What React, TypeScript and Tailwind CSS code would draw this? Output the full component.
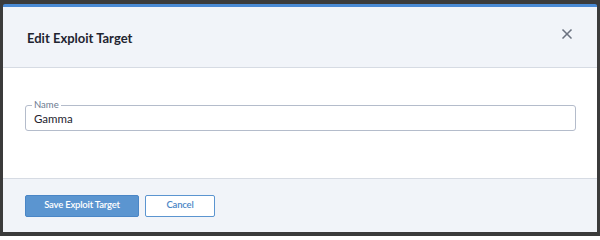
import React from 'react';
import { X } from 'lucide-react';

const App: React.FC = () => {
  return (
    <div
      className="w-[600px] h-[236px] bg-[#3b3b3b] pt-[4px] pl-[3px] pr-[3px] pb-[4px]"
      style={{ fontFamily: 'Lato, "Open Sans", "Liberation Sans", sans-serif' }}
    >
      <div className="h-full flex flex-col bg-white border-t-[3px] border-[#4a8ad4] rounded-t-[2px] overflow-hidden">
        {/* header */}
        <div className="h-[61px] bg-[#f1f4f9] border-b border-[#d6dbe3] flex items-center justify-between pl-[24px] pr-[22px]">
          <h1 className="text-[13px] font-bold text-[#1f2430] mt-[4px]">Edit Exploit Target</h1>
          <X className="w-[16px] h-[16px] text-[#6b7280] mt-[-6px]" strokeWidth={2.5} />
        </div>

        {/* body */}
        <div className="flex-1 pl-[22px] pr-[21px] pt-[37px]">
          <div className="relative h-[26px] border border-[#b4bccb] rounded-[3px] flex items-center px-[8px]">
            <span className="absolute left-[6px] top-[-7px] bg-white px-[2px] text-[9.5px] leading-[12px] text-[#6b7a90]">
              Name
            </span>
            <span className="text-[11.5px] leading-[16px] text-[#1f2430] pt-[2px]">Gamma</span>
          </div>
        </div>

        {/* footer */}
        <div className="h-[54px] bg-[#f1f4f9] border-t border-[#d6dbe3] flex items-center gap-[6px] pl-[22px]">
          <button className="w-[114px] h-[22px] bg-[#5b95d0] border border-[#4a86c6] rounded-[2px] text-white text-[9.5px] font-semibold tracking-[-0.2px]">
            Save Exploit Target
          </button>
          <button className="w-[70px] h-[22px] bg-white border-[1.5px] border-[#5b95d0] rounded-[2px] text-[#4a86c6] text-[9.5px] font-semibold tracking-[-0.2px]">
            Cancel
          </button>
        </div>
      </div>
    </div>
  );
};

export default App;
